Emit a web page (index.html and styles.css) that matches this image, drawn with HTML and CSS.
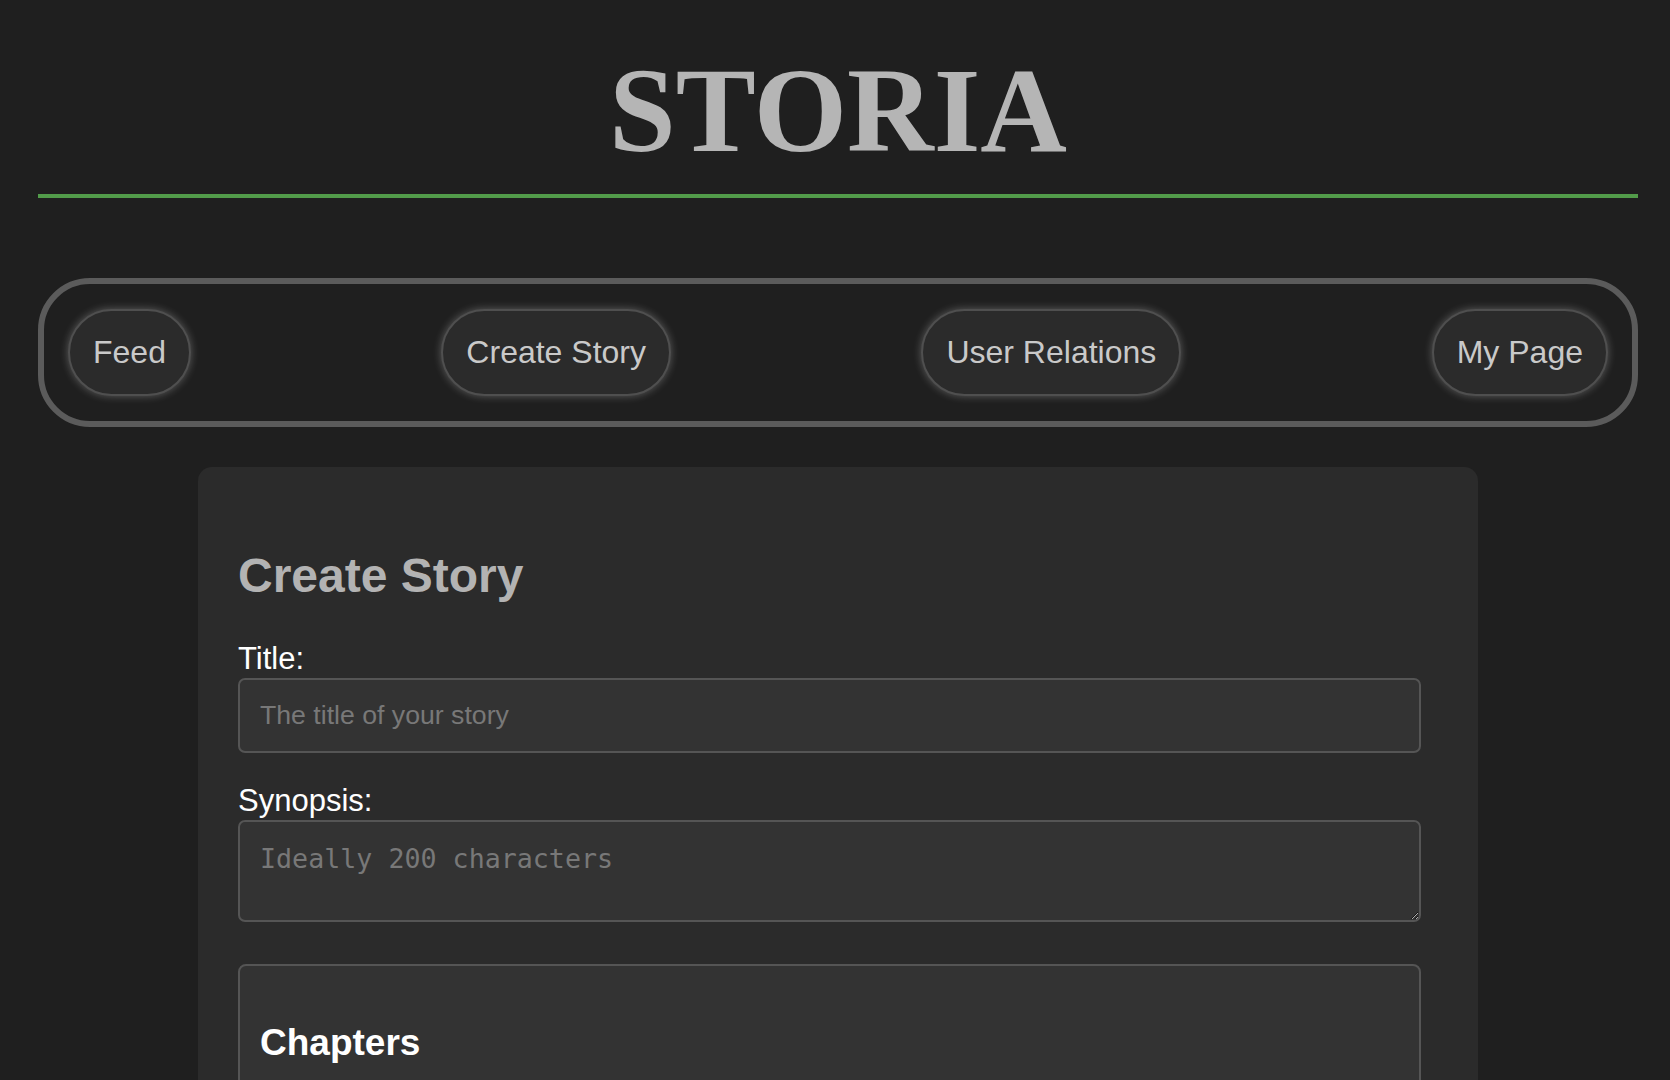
FILE: index.html
```html
<!DOCTYPE html>
<html lang="en">
<head>
<meta charset="utf-8">
<title>Storia</title>
<link rel="stylesheet" href="styles.css">
</head>
<body>
<div class="page">
  <header class="site-header">
    <h1 class="logo">STORIA</h1>
    <div class="rule"></div>
  </header>
  <nav class="nav">
    <a class="nav-btn" href="#">Feed</a>
    <a class="nav-btn" href="#">Create Story</a>
    <a class="nav-btn" href="#">User Relations</a>
    <a class="nav-btn" href="#">My Page</a>
  </nav>
  <main class="card">
    <h2 class="card-title">Create Story</h2>
    <label class="label" for="title">Title:</label>
    <input class="field" id="title" type="text" placeholder="The title of your story">
    <label class="label label-gap" for="synopsis">Synopsis:</label>
    <textarea class="field area" id="synopsis" placeholder="Ideally 200 characters"></textarea>
    <section class="chapters">
      <h3 class="chapters-title">Chapters</h3>
      <div class="chapters-body"></div>
    </section>
  </main>
</div>
</body>
</html>
```
FILE: styles.css
```css
html, body {
  margin: 0;
  padding: 0;
  background: #1f1f1f;
  color: #ffffff;
  font-family: "Liberation Sans", Arial, sans-serif;
}

.page {
  width: 1600px;
  margin: 0 0 0 38px;
}

.site-header {
  padding-top: 42px;
}

.logo {
  margin: 0;
  text-align: center;
  font-family: "Liberation Serif", "Times New Roman", serif;
  font-weight: bold;
  font-size: 120px;
  line-height: normal;
  color: #b5b5b5;
}

.rule {
  margin-top: 14px;
  height: 4px;
  background: #529b4a;
}

.nav {
  margin-top: 80px;
  border: 6px solid #5b5b5b;
  border-radius: 52px;
  padding: 25px 24px;
  display: flex;
  justify-content: space-between;
  align-items: center;
}

.nav-btn {
  display: block;
  font-size: 32px;
  line-height: normal;
  color: #c9c9c9;
  text-decoration: none;
  background: #2b2b2b;
  border: 2px solid #4f4f4f;
  border-radius: 50px;
  padding: 23px 23px;
  box-shadow: 0 0 8px rgba(255, 255, 255, 0.28);
}

.card {
  width: 1280px;
  box-sizing: border-box;
  margin: 40px auto 0;
  background: #2b2b2b;
  border-radius: 14px;
  padding: 40px 40px 40px;
  min-height: 700px;
}

.card-title {
  margin: 41px 0 0;
  font-size: 48px;
  font-weight: bold;
  line-height: normal;
  color: #b3b3b3;
}

.label {
  display: block;
  margin-top: 38px;
  font-size: 31px;
  line-height: normal;
  color: #ffffff;
}

.label-gap {
  margin-top: 30px;
}

.field {
  display: block;
  box-sizing: border-box;
  width: calc(100% - 17px);
  margin-top: 1px;
  background: #333333;
  border: 2px solid #555555;
  border-radius: 7px;
  padding: 20px 20px;
  font-family: "Liberation Sans", Arial, sans-serif;
  font-size: 26.67px;
  line-height: normal;
  color: #dddddd;
  outline: none;
}

.field::placeholder {
  color: #787878;
}

.area {
  height: 102px;
  resize: vertical;
  font-family: "DejaVu Sans Mono", monospace;
  font-size: 26.67px;
  line-height: 31px;
  padding-top: 21px;
  color-scheme: dark;
}

.chapters {
  box-sizing: border-box;
  width: calc(100% - 17px);
  margin-top: 42px;
  background: #333333;
  border: 2px solid #555555;
  border-radius: 8px;
  padding: 20px 20px;
  min-height: 300px;
}

.chapters-title {
  margin: 36px 0 0;
  font-size: 37px;
  font-weight: bold;
  line-height: normal;
  color: #ffffff;
}
```
